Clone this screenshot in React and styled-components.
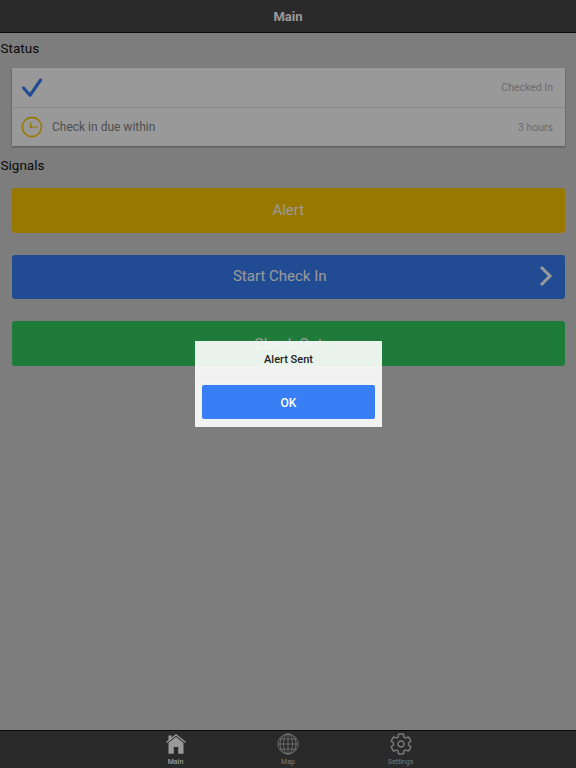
import styled, { createGlobalStyle } from "styled-components";
import { IoIosHome } from "react-icons/io";
import { IoSettingsOutline } from "react-icons/io5";

const GlobalStyle = createGlobalStyle`
  html, body {
    margin: 0;
    height: 100%;
    font-family: Roboto, "Noto Sans", sans-serif;
    background: #d0d0d0;
  }
`;

const Page = styled.div`
  position: relative;
  width: 576px;
  height: 768px;
  display: flex;
  flex-direction: column;
  overflow: hidden;
`;

const TopBar = styled.header`
  height: 33px;
  box-sizing: border-box;
  flex: none;
  display: flex;
  align-items: center;
  justify-content: center;
  background: #464646;
  border-bottom: 1px solid #111;
  color: #fff;
  font-size: 13px;
  font-weight: 700;
`;

const Content = styled.main`
  flex: 1;
  padding-top: 7px;
`;

const SectionTitle = styled.h2`
  margin: 0;
  font-size: 13.5px;
  line-height: 16px;
  font-weight: 400;
  color: #111;
  padding-left: 0.5px;
`;

const Card = styled.section`
  margin: 12px 11.5px 11px 12px;
  background: #fff;
  box-shadow: 0 1px 2px rgba(0, 0, 0, 0.35);
`;

const Row = styled.div`
  height: 39px;
  box-sizing: border-box;
  display: flex;
  align-items: center;
  padding: 0 11.5px 0 9px;
  border-top: ${({ $divided }) => ($divided ? "1px solid #e4e4e4" : "none")};
`;

const RowIcon = styled.svg`
  width: 24px;
  height: 24px;
  flex: none;
`;

const RowLabel = styled.span`
  margin-left: 7px;
  font-size: 12px;
  color: #858585;
`;

const RowValue = styled.span`
  margin-left: auto;
  font-size: 10.5px;
  color: #b4b4b4;
`;

const Signals = styled.div`
  display: flex;
  flex-direction: column;
  gap: 22.2px;
  margin: 15.2px 11.5px 0 12px;
`;

const SignalButton = styled.button`
  position: relative;
  height: 44.4px;
  border: none;
  border-radius: 3px;
  padding: 0 ${({ $arrow }) => ($arrow ? "17px" : "0")} ${({ $arrow }) => ($arrow ? "2px" : "0")} 0;
  background: ${({ $color }) => $color};
  color: #fff;
  font-family: inherit;
  font-size: 15px;
`;

const Chevron = styled.svg`
  position: absolute;
  right: 11px;
  top: 10px;
  width: 16px;
  height: 22px;
`;

const TabBar = styled.nav`
  height: 38px;
  flex: none;
  display: flex;
  justify-content: center;
  background: #464646;
  border-top: 1px solid #111;
  box-sizing: border-box;
`;

const Tab = styled.div`
  width: 112.5px;
  display: flex;
  flex-direction: column;
  align-items: center;
  color: ${({ $active }) => ($active ? "#fff" : "#c8c8c8")};
  font-size: 7px;
  font-weight: ${({ $active }) => ($active ? 500 : 400)};
  svg {
    width: 24px;
    height: 24px;
    margin-top: 1px;
  }
  span {
    margin-top: 2px;
    line-height: 8px;
  }
`;

const Scrim = styled.div`
  position: absolute;
  inset: 0;
  background: rgba(0, 0, 0, 0.4);
`;

const Dialog = styled.div`
  position: absolute;
  left: 195px;
  top: 341px;
  width: 187px;
  height: 86px;
  box-sizing: border-box;
  background: rgba(255, 255, 255, 0.9);
  display: flex;
  flex-direction: column;
`;

const DialogTitle = styled.div`
  height: 36px;
  box-sizing: border-box;
  padding-top: 12px;
  text-align: center;
  font-size: 11px;
  line-height: 13px;
  font-weight: 500;
  color: #222;
`;

const DialogFooter = styled.div`
  flex: 1;
  display: flex;
  padding: 8px 7px;
  border-top: 1px solid rgba(0, 0, 0, 0.02);
`;

const DialogButton = styled.button`
  width: 100%;
  height: 34px;
  border: none;
  border-radius: 2px;
  padding: 1px 0 0;
  background: #387ef5;
  color: #fff;
  font-family: inherit;
  font-size: 12px;
  font-weight: 500;
`;

export default function App() {
  return (
    <Page>
      <GlobalStyle />
      <TopBar>Main</TopBar>
      <Content>
        <SectionTitle>Status</SectionTitle>
        <Card>
          <Row>
            <RowIcon viewBox="0 0 24 24">
              <path
                d="M2.6 12 L9 19.3 L19.6 4"
                fill="none"
                stroke="#387ef5"
                strokeWidth="3.2"
                strokeLinecap="round"
                strokeLinejoin="round"
              />
            </RowIcon>
            <RowValue>Checked In</RowValue>
          </Row>
          <Row $divided>
            <RowIcon viewBox="0 0 24 24">
              <circle cx="10.9" cy="12" r="9.6" fill="none" stroke="#ffc900" strokeWidth="1.6" />
              <path d="M9.7 7 V12 H17" fill="none" stroke="#ffc900" strokeWidth="1.2" />
              <circle cx="9.7" cy="12" r="1.3" fill="#ffc900" />
            </RowIcon>
            <RowLabel>Check in due within</RowLabel>
            <RowValue>3 hours</RowValue>
          </Row>
        </Card>
        <SectionTitle>Signals</SectionTitle>
        <Signals>
          <SignalButton $color="#ffc900">Alert</SignalButton>
          <SignalButton $color="#387ef5" $arrow>
            Start Check In
            <Chevron viewBox="0 0 16 22">
              <path d="M3 2 L12 11 L3 20" fill="none" stroke="#fff" strokeWidth="3" />
            </Chevron>
          </SignalButton>
          <SignalButton $color="#33cd5f">Check Out</SignalButton>
        </Signals>
      </Content>
      <TabBar>
        <Tab $active>
          <IoIosHome />
          <span>Main</span>
        </Tab>
        <Tab>
          <svg viewBox="0 0 24 24" fill="none" stroke="currentColor" strokeWidth="0.8">
            <circle cx="12" cy="12" r="10" />
            <ellipse cx="12" cy="12" rx="4.6" ry="10" />
            <ellipse cx="12" cy="12" rx="8" ry="10" />
            <path d="M12 2 V22 M2 12 H22 M3.5 7 H20.5 M3.5 17 H20.5" />
          </svg>
          <span>Map</span>
        </Tab>
        <Tab>
          <IoSettingsOutline />
          <span>Settings</span>
        </Tab>
      </TabBar>
      <Scrim />
      <Dialog>
        <DialogTitle>Alert Sent</DialogTitle>
        <DialogFooter>
          <DialogButton>OK</DialogButton>
        </DialogFooter>
      </Dialog>
    </Page>
  );
}
